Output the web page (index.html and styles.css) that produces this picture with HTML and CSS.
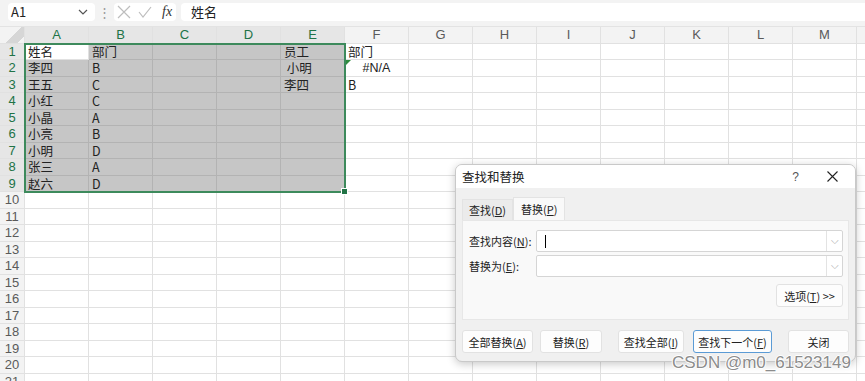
FILE: index.html
```html
<!DOCTYPE html>
<html lang="zh-CN">
<head>
  <meta charset="UTF-8">
  <title>查找和替换</title>
  <link rel="stylesheet" href="styles.css">
</head>
<body>

  <div id="formulaBar">
    <div class="name-box">
      <span>A1</span>
      <svg width="10" height="6" viewBox="0 0 10 6"><path d="M1 1 L5 5 L9 1" fill="none" stroke="#555" stroke-width="1.2"/></svg>
    </div>
    <div class="fb-dots">⋮</div>
    <div class="fx-box">
      <svg width="14" height="14" viewBox="0 0 14 14"><path d="M1 1 L13 13 M13 1 L1 13" stroke="#bdbdbd" stroke-width="1.2"/></svg>
      <svg width="14" height="14" viewBox="0 0 14 14"><path d="M1 7 L5 12 L13 2" fill="none" stroke="#bdbdbd" stroke-width="1.2"/></svg>
      <span class="fx">fx</span>
    </div>
    <div class="formula-input">姓名</div>
  </div>

  <div id="sheet"></div>

  <div id="selBox"><span class="handle"></span></div>
  <div id="errMark"></div>

  <div id="dialog">
    <div class="dlg-title">
      <span>查找和替换</span>
      <span class="dlg-icons"><span class="help">?</span>
        <svg width="11" height="11" viewBox="0 0 11 11"><path d="M0.5 0.5 L10.5 10.5 M10.5 0.5 L0.5 10.5" stroke="#222" stroke-width="1.1"/></svg>
      </span>
    </div>
    <div class="dlg-body">
      <div class="tabs">
        <div class="tab">查找(<u>D</u>)</div>
        <div class="tab active">替换(<u>P</u>)</div>
      </div>
      <div class="panel">
        <div class="field">
          <label>查找内容(<u>N</u>):</label>
          <div class="combo"><span class="caret"></span><span class="drop">⌵</span></div>
        </div>
        <div class="field">
          <label>替换为(<u>E</u>):</label>
          <div class="combo"><span class="drop">⌵</span></div>
        </div>
        <div class="options-row">
          <button class="btn options">选项(<u>T</u>) &gt;&gt;</button>
        </div>
      </div>
      <div class="btn-row">
        <button class="btn b1">全部替换(<u>A</u>)</button>
        <button class="btn b2">替换(<u>R</u>)</button>
        <button class="btn b3">查找全部(<u>I</u>)</button>
        <button class="btn b4 focus">查找下一个(<u>F</u>)</button>
        <button class="btn b5">关闭</button>
      </div>
    </div>
  </div>

  <div id="watermark">CSDN @m0_61523149</div>

  <script>
    const sheet = document.getElementById('sheet');
    const cols = 'ABCDEFGHIJKLMN'.split('');
    const data = {
      A1: '姓名', B1: '部门', E1: '员工', F1: '部门',
      A2: '李四', B2: 'B', E2: ' 小明', F2: '#N/A',
      A3: '王五', B3: 'C', E3: '李四', F3: 'B',
      A4: '小红', B4: 'C',
      A5: '小晶', B5: 'A',
      A6: '小亮', B6: 'B',
      A7: '小明', B7: 'D',
      A8: '张三', B8: 'A',
      A9: '赵六', B9: 'D'
    };

    function cell(cls, text) {
      const d = document.createElement('div');
      d.className = cls;
      if (text) d.textContent = text;
      sheet.appendChild(d);
    }

    cell('corner');
    cols.forEach((c, i) => cell(i < 5 ? 'col-head hsel' : 'col-head', c));

    for (let r = 1; r <= 21; r++) {
      cell(r <= 9 ? 'row-head hsel' : 'row-head', String(r));
      cols.forEach((c, i) => {
        let cls = 'cell';
        if (r <= 9 && i < 5 && !(r === 1 && i === 0)) cls += ' sel';
        if (c + r === 'F2') cls += ' center';
        cell(cls, data[c + r]);
      });
    }
  </script>

</body>
</html>
```

FILE: styles.css
```css
html, body {
  margin: 0;
  padding: 0;
  height: 100%;
  background: #fff;
  font-family: 'Noto Sans CJK SC', 'Liberation Sans', sans-serif;
  color: #222;
  overflow: hidden;
  position: relative;
}

#formulaBar {
  height: 27px;
  box-sizing: border-box;
  display: flex;
  align-items: flex-start;
  padding: 3px 0 0 8px;
  background: #f3f3f3;
  border-bottom: 1px solid #e3e3e3;
  font-size: 13px;
}

.name-box {
  width: 87px;
  height: 18px;
  box-sizing: border-box;
  background: #fff;
  border-radius: 4px;
  display: flex;
  align-items: center;
  justify-content: space-between;
  padding: 0 7px 0 3px;
  line-height: 18px;
}

.fb-dots {
  width: 19px;
  text-align: center;
  color: #999;
  line-height: 18px;
}

.fx-box {
  width: 62px;
  height: 18px;
  box-sizing: border-box;
  background: #fff;
  border-radius: 4px;
  display: flex;
  align-items: center;
  gap: 7px;
  padding-left: 3px;
}

.fx {
  font-family: 'Liberation Serif', serif;
  font-style: italic;
  font-size: 14px;
  color: #333;
  margin-left: 3px;
}

.formula-input {
  flex: 1;
  height: 18px;
  margin-left: 5px;
  background: #fff;
  border-radius: 4px 0 0 4px;
  padding-left: 10px;
  line-height: 18px;
}

#sheet {
  width: 865px;
  overflow: hidden;
  display: grid;
  grid-template-columns: 25px repeat(14, 64px);
  grid-auto-rows: 16.5px;
  font-size: 12.5px;
}

#sheet > div {
  box-sizing: border-box;
  border-right: 1px solid #e1e1e1;
  border-bottom: 1px solid #e1e1e1;
  line-height: 16px;
  white-space: pre;
}

.corner {
  background: #f3f3f3 linear-gradient(135deg, transparent 55%, #d6d6d6 55%, #d6d6d6 85%, transparent 85%);
}

.col-head, .row-head {
  background: #f3f3f3;
  color: #5a5a5a;
  text-align: center;
  font-family: 'Liberation Sans', sans-serif;
  font-size: 13px;
  overflow: hidden;
}

.col-head.hsel {
  color: #217346;
  background: #e6e6e6;
  border-bottom: 1px solid #217346 !important;
}

.row-head.hsel {
  color: #217346;
  background: #e6e6e6;
  border-right: 1px solid #217346 !important;
}

.cell {
  padding-left: 3px;
}

.cell.sel {
  background: #c6c6c6;
  border-color: #b3b3b3 !important;
}

.cell.center {
  text-align: center;
  padding-left: 0;
  font-family: 'Liberation Sans', sans-serif;
}

#selBox {
  position: absolute;
  left: 24px;
  top: 42.5px;
  width: 322px;
  height: 150px;
  box-sizing: border-box;
  border: 2px solid #3d8a5c;
}

#selBox .handle {
  position: absolute;
  right: -4px;
  bottom: -4px;
  width: 5px;
  height: 5px;
  background: #217346;
  border: 1px solid #fff;
}

#errMark {
  position: absolute;
  left: 346px;
  top: 60px;
  width: 0;
  height: 0;
  border-top: 5px solid #2e8b3e;
  border-right: 5px solid transparent;
}

#dialog {
  position: absolute;
  left: 455px;
  top: 164px;
  width: 401px;
  height: 198px;
  box-sizing: border-box;
  background: #f0f0f0;
  border: 1px solid #c9c9c9;
  border-radius: 7px;
  box-shadow: 0 2px 8px rgba(0, 0, 0, 0.22);
  font-size: 11px;
  overflow: hidden;
}

.dlg-title {
  height: 23px;
  background: #fff;
  display: flex;
  align-items: center;
  justify-content: space-between;
  padding: 0 17px 0 6px;
  font-size: 12.5px;
}

.dlg-icons {
  display: flex;
  align-items: center;
  gap: 28px;
}

.help {
  font-family: 'Liberation Sans', sans-serif;
  color: #555;
  font-size: 12px;
}

.dlg-body {
  padding: 9px 6px 0 6px;
}

.tabs {
  display: flex;
  align-items: flex-end;
  height: 23px;
}

.tab {
  height: 21px;
  line-height: 21px;
  padding: 0 6px;
  background: #ebebeb;
  border: 1px solid #e3e3e3;
  border-bottom: none;
  box-sizing: border-box;
}

.tab.active {
  height: 23px;
  background: #f9f9f9;
  line-height: 23px;
  padding: 0 7px;
}

.panel {
  height: 100px;
  box-sizing: border-box;
  background: #f9f9f9;
  border: 1px solid #e7e7e7;
  padding: 9px 5px 0 6px;
}

.field {
  display: flex;
  align-items: center;
  margin-bottom: 3px;
}

.field label {
  width: 67px;
  white-space: nowrap;
}

.combo {
  flex: 1;
  height: 22px;
  box-sizing: border-box;
  background: #fff;
  border: 1px solid #d5d5d5;
  border-radius: 2px;
  position: relative;
}

.caret {
  position: absolute;
  left: 8px;
  top: 4px;
  width: 1px;
  height: 13px;
  background: #000;
}

.drop {
  position: absolute;
  right: 0;
  top: 0;
  width: 15px;
  height: 20px;
  border-left: 1px solid #e3e3e3;
  color: #aaa;
  font-size: 10px;
  text-align: center;
  line-height: 18px;
}

.options-row {
  display: flex;
  justify-content: flex-end;
  margin-top: 7px;
}

.btn {
  font-family: 'Noto Sans CJK SC', 'Liberation Sans', sans-serif;
  font-size: 11px;
  height: 23px;
  padding: 0;
  background: #fdfdfd;
  border: 1px solid #e2e2e2;
  border-radius: 3px;
  color: #222;
  white-space: nowrap;
}

.options {
  width: 67px;
}

.btn-row {
  display: flex;
  margin-top: 10px;
}

.b1 { width: 71px; }
.b2 { width: 62px; margin-left: 7px; }
.b3 { width: 66px; margin-left: 16px; }
.b4 { width: 79px; margin-left: 9px; }
.b5 { width: 61px; margin-left: 16px; }

.btn.focus {
  border: 1px solid #5b9bd5;
}

#watermark {
  position: absolute;
  left: 672px;
  top: 353px;
  font-family: 'Liberation Sans', sans-serif;
  font-size: 17px;
  color: #8c8c8c;
  text-shadow: 1px 0 0 #fff, -1px 0 0 #fff, 0 1px 0 #fff, 0 -1px 0 #fff;
}
```
